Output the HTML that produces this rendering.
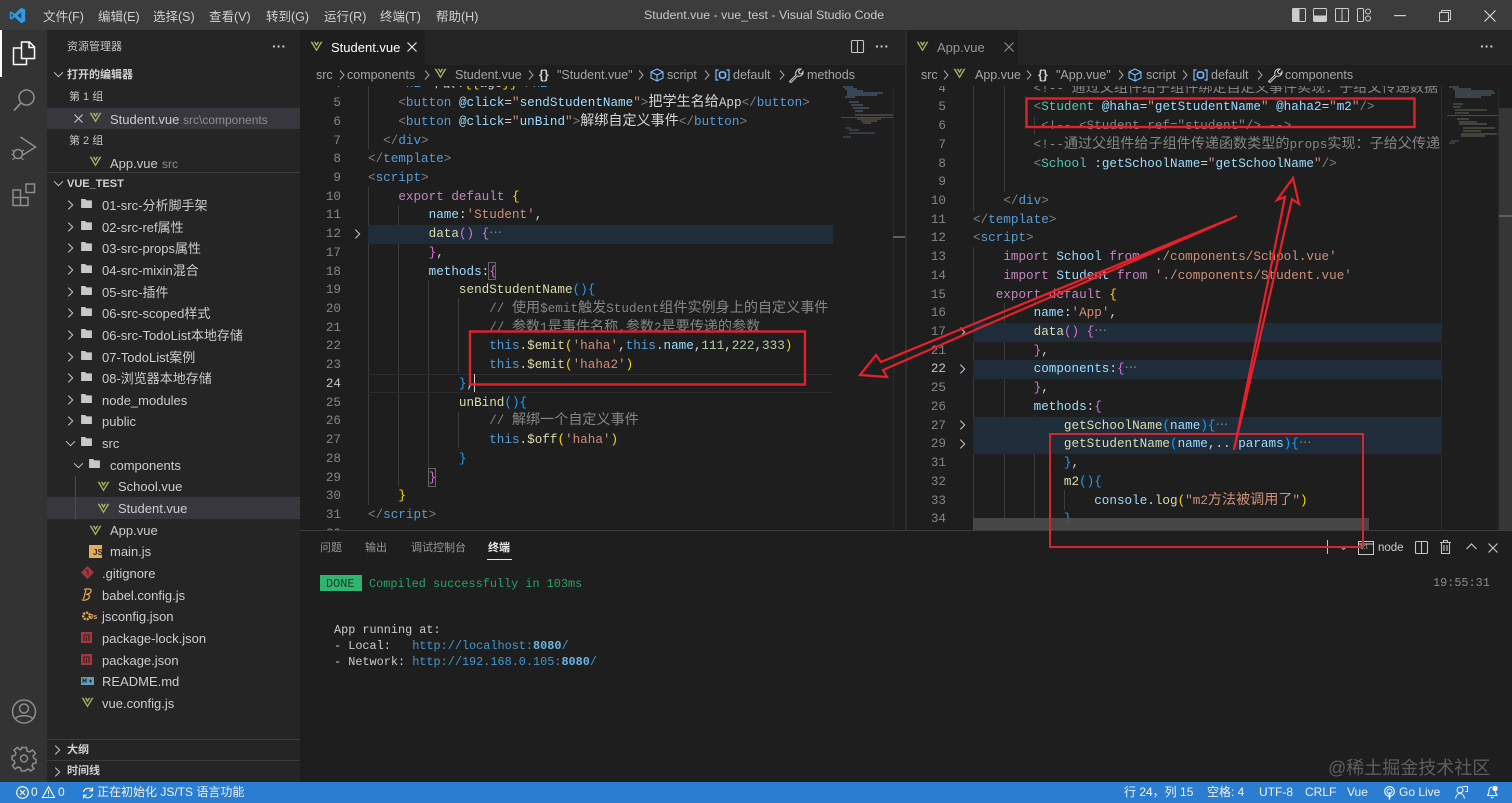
<!DOCTYPE html>
<html lang="zh">
<head>
<meta charset="utf-8">
<title>Student.vue - vue_test - Visual Studio Code</title>
<style>
html,body{margin:0;padding:0;background:#1e1e1e;}
body{width:1512px;height:803px;position:relative;overflow:hidden;font-family:"Liberation Sans","Noto Sans CJK SC",sans-serif;font-size:13px;color:#ccc;filter:blur(.35px);}
.a{position:absolute;white-space:pre;height:20px;line-height:20px;}
.bx{position:absolute;}
svg{position:absolute;overflow:visible;}
.m{font-size:12.5px;color:#d0d0d0;top:6.5px;}
.s{color:#ccc;margin-top:1px;}
.g{font-size:12px;color:#8f8f8f;margin-top:1px;}
.h11{font-size:11px;color:#c4c4c4;}
.b11{font-size:11px;color:#d0d0d0;font-weight:bold;}
.bc{font-size:12.5px;color:#a5a5a5;top:65px;}
.st{font-size:12px;color:#f2f2f2;top:782px;}
.pt{font-size:11px;color:#979797;top:538px;}
.pane{position:absolute;top:86px;height:444px;overflow:hidden;isolation:isolate;font-family:"Liberation Mono","Noto Sans CJK SC",monospace;font-size:12.63px;color:#d4d4d4;}
.r{position:relative;height:18.73px;line-height:18.73px;white-space:pre;}
.r b{position:absolute;top:0;text-align:right;color:#858585;font-weight:normal;}
.r i,.tm i{font-style:normal;font-size:14.1px;}
.p1 .r{padding-left:68px;}
.p1 .r b{left:0;width:41px;}
.p2 .r{padding-left:66px;}
.p2 .r b{left:0;width:39px;}
.hl::before{content:"";position:absolute;right:0;top:0;bottom:0;background:#1f2d3a;z-index:-1;}
.p1 .hl::before{left:68px;}
.p2 .hl::before{left:66px;}
.gd{position:absolute;width:1px;background:#3c3c3c;z-index:-1;}
.t{color:#808080}.n{color:#569cd6}.at{color:#9cdcfe}.str{color:#ce9178}.c{color:#4ec9b0}.cm{color:#858585}.k{color:#c586c0}.f{color:#dcdcaa}.y{color:#ffd700}.pu{color:#da70d6}.bl{color:#179fff}.nm{color:#b5cea8}
.fd{position:absolute;top:5px;}
.tm{position:absolute;font-family:"Liberation Mono","Noto Sans CJK SC",monospace;font-size:11.85px;white-space:pre;height:16px;line-height:16px;color:#cccccc;}
.u{color:#3f98cf}.ub{color:#66b8e8;font-weight:bold}
</style>
</head>
<body>
<svg width="0" height="0" style="position:absolute">
  <defs>
    <symbol id="v" viewBox="0 0 14 12"><path d="M.5 .8 7 11.500 13.500 .8H11.600L7 8.800 2.400 .8Z" fill="#a3b766"/><path d="M4 .8 7 5.800 10 .8H8.300L7 3 5.700 .8Z" fill="#a3b766"/></symbol>
    <symbol id="fo" viewBox="0 0 12 10"><path d="M0 0H4.500L6 1.500H12V10H0Z" fill="#c8c8c8"/></symbol>
    <symbol id="cr" viewBox="0 0 8 12"><path d="M1.500 1 6.500 6 1.500 11" fill="none" stroke="#c5c5c5" stroke-width="1.200"/></symbol>
    <symbol id="cd" viewBox="0 0 12 8"><path d="M1 1.500 6 6.500 11 1.500" fill="none" stroke="#c5c5c5" stroke-width="1.200"/></symbol>
    <symbol id="sep" viewBox="0 0 6 10"><path d="M1 .5 5 5 1 9.500" fill="none" stroke="#a5a5a5" stroke-width="1"/></symbol>
    <symbol id="cube" viewBox="0 0 14 14"><path d="M7 1 13 4V10L7 13 1 10V4ZM1 4 7 7 13 4M7 7V13" fill="none" stroke="#75beff" stroke-width="1.100"/></symbol>
    <symbol id="field" viewBox="0 0 15 12"><path d="M3.500 1H1V11H3.500M11.500 1H14V11H11.500" fill="none" stroke="#75beff" stroke-width="1.200"/><rect x="4.500" y="3" width="6" height="6" rx="2" fill="none" stroke="#75beff" stroke-width="1.600"/></symbol>
    <symbol id="wr" viewBox="0 0 16 16"><path d="M1.500 14.500 8 8C7 5 9 1.500 13 2L10.500 4.500 11.500 6.500 13.500 7 15 4.500C15.500 8 12 10 9.500 9L3 15.500Z" fill="none" stroke="#c5c5c5" stroke-width="1.100"/></symbol>
  </defs>
</svg>

<!-- title bar -->
<div class="bx" style="left:0;top:0;width:1512px;height:30px;background:#3c3c3c"></div>
<svg style="left:9px;top:7px" width="17" height="17" viewBox="0 0 17 17"><path d="M12.200 .8 16.200 2.600V14.400L12.200 16.200 5.600 10 2.300 12.600.8 11.800V5.200L2.300 4.400 5.600 7ZM12.200 5.200 8.400 8.500 12.200 11.800Z" fill="#2f9be8"/><path d="M2.300 6.300V10.700L4.500 8.500Z" fill="#3c3c3c"/></svg>
<div class="a m" style="left:43px">文件(F)</div>
<div class="a m" style="left:98px">编辑(E)</div>
<div class="a m" style="left:153px">选择(S)</div>
<div class="a m" style="left:209px">查看(V)</div>
<div class="a m" style="left:266px">转到(G)</div>
<div class="a m" style="left:324px">运行(R)</div>
<div class="a m" style="left:380px">终端(T)</div>
<div class="a m" style="left:436px">帮助(H)</div>
<div class="a" style="left:644px;top:5px;font-size:12.400px;color:#c8c8c8">Student.vue - vue_test - Visual Studio Code</div>
<svg style="left:1292px;top:8px" width="14" height="14"><rect x=".5" y=".5" width="13" height="13" rx="1" fill="none" stroke="#ccc"/><rect x=".5" y=".5" width="7" height="13" fill="#ccc"/></svg>
<svg style="left:1313px;top:8px" width="14" height="14"><rect x=".5" y=".5" width="13" height="13" rx="1" fill="none" stroke="#ccc"/><rect x=".5" y="7.500" width="13" height="6" fill="#ccc"/></svg>
<svg style="left:1335px;top:8px" width="14" height="14"><rect x=".5" y=".5" width="13" height="13" rx="1" fill="none" stroke="#ccc"/><path d="M7 .5V13.500" stroke="#ccc"/></svg>
<svg style="left:1357px;top:8px" width="14" height="14"><rect x=".5" y=".5" width="6" height="13" rx="1" fill="none" stroke="#ccc"/><circle cx="11" cy="3.500" r="2.500" fill="none" stroke="#ccc"/><circle cx="11" cy="10.500" r="2.500" fill="none" stroke="#ccc"/></svg>
<svg style="left:1394px;top:15px" width="12" height="2"><rect width="12" height="1.200" fill="#ccc"/></svg>
<svg style="left:1439px;top:10px" width="12" height="12"><path d="M.5 2.500H9.500V11.500H.5ZM2.500 2.500V.5H11.500V9.500H9.500" fill="none" stroke="#ccc"/></svg>
<svg style="left:1484px;top:10px" width="12" height="12"><path d="M.5 .5 11.500 11.500M11.500 .5 .5 11.500" stroke="#ddd" stroke-width="1.100"/></svg>

<!-- activity bar -->
<div class="bx" style="left:0;top:30px;width:47px;height:752px;background:#333"></div>
<div class="bx" style="left:0;top:30px;width:2px;height:47px;background:#fff"></div>
<svg style="left:12px;top:41px" width="24" height="25"><path d="M9.500 1H17.500L22.500 6V17.500H9.500ZM17 1V6.500H22.500M9.500 7H1.500V23.500H14.500V17.500" fill="none" stroke="#fff" stroke-width="1.500"/></svg>
<svg style="left:12px;top:88px" width="24" height="24"><circle cx="14.500" cy="9.500" r="7.500" fill="none" stroke="#8d8d8d" stroke-width="1.500"/><path d="M9 15 2 22.500" stroke="#8d8d8d" stroke-width="1.700"/></svg>
<svg style="left:11px;top:135px" width="26" height="26"><path d="M9.500 2 24.500 12 11 20.500" fill="none" stroke="#8d8d8d" stroke-width="1.500"/><circle cx="7" cy="19" r="4.500" fill="none" stroke="#8d8d8d" stroke-width="1.500"/><path d="M1 15 4 17M13 15 10 17M.5 19.500H2.500M11.500 19.500H13.500M1.500 25 4 22.500M12.500 25 10 22.500" stroke="#8d8d8d" stroke-width="1.200"/></svg>
<svg style="left:12px;top:183px" width="24" height="24"><path d="M1 7H8.500V14.500H16V22.500H1ZM1 14.500H8.500V22.500" fill="none" stroke="#8d8d8d" stroke-width="1.500"/><rect x="14" y="1" width="8.500" height="8.500" fill="none" stroke="#8d8d8d" stroke-width="1.500"/></svg>
<svg style="left:11px;top:699px" width="26" height="26"><circle cx="13" cy="12.500" r="11.500" fill="none" stroke="#8d8d8d" stroke-width="1.500"/><circle cx="13" cy="9.500" r="4.500" fill="none" stroke="#8d8d8d" stroke-width="1.500"/><path d="M4.500 20C6 15.500 20 15.500 21.500 20" fill="none" stroke="#8d8d8d" stroke-width="1.500"/></svg>
<svg style="left:11px;top:746px" width="26" height="26"><circle cx="13" cy="12.500" r="3.500" fill="none" stroke="#8d8d8d" stroke-width="1.500"/><path d="M10.500 1.500H15.500L16 5 18.500 6 21.500 4 24.500 7.500 22 10 23 12.500 25 13.500V17L22 17.500 21 20 23 22.500 19.500 25 17.500 23 15 24 14.500 25H10.500L9.500 22 7 21 4 23 1.500 19.500 4 17 3 14.500 1 13.500V10L4 9.500 5 7 3 4 6.500 1.500 9 4 10 3.500Z" fill="none" stroke="#8d8d8d" stroke-width="1.500"/></svg>

<!-- sidebar -->
<div class="bx" style="left:47px;top:30px;width:253px;height:752px;background:#252526"></div>
<div class="a h11" style="left:67px;top:37px">资源管理器</div>
<div class="a" style="left:272px;top:36px;font-size:14px;font-weight:bold;color:#c5c5c5;letter-spacing:0">···</div>
<svg style="left:53px;top:71px" width="11" height="7"><use href="#cd"/></svg>
<div class="a b11" style="left:67px;top:65px">打开的编辑器</div>
<div class="a h11" style="left:69px;top:87px">第 1 组</div>
<div class="bx" style="left:47px;top:108px;width:253px;height:21px;background:#37373d"></div>
<svg style="left:74px;top:114px" width="9" height="9"><path d="M.5 .5 8.500 8.500M8.500 .5 .5 8.500" stroke="#c5c5c5" stroke-width="1.100"/></svg>
<svg style="left:89px;top:112px" width="13" height="11"><use href="#v"/></svg>
<div class="a s" style="left:110px;top:109px">Student.vue</div>
<div class="a g" style="left:183px;top:109px">src\components</div>
<div class="a h11" style="left:69px;top:131px">第 2 组</div>
<svg style="left:89px;top:156px" width="13" height="11"><use href="#v"/></svg>
<div class="a s" style="left:110px;top:153px">App.vue</div>
<div class="a g" style="left:162px;top:153px">src</div>
<div class="bx" style="left:47px;top:172px;width:253px;height:1px;background:#3c3c3c"></div>
<svg style="left:53px;top:180px" width="11" height="7"><use href="#cd"/></svg>
<div class="a b11" style="left:67px;top:174px">VUE_TEST</div>

<svg style="left:67px;top:199px" width="7" height="12"><use href="#cr"/></svg><svg style="left:81px;top:199px" width="11" height="9"><use href="#fo"/></svg><div class="a s" style="left:102px;top:195px">01-src-分析脚手架</div>
<svg style="left:67px;top:221px" width="7" height="12"><use href="#cr"/></svg><svg style="left:81px;top:221px" width="11" height="9"><use href="#fo"/></svg><div class="a s" style="left:102px;top:217px">02-src-ref属性</div>
<svg style="left:67px;top:242px" width="7" height="12"><use href="#cr"/></svg><svg style="left:81px;top:242px" width="11" height="9"><use href="#fo"/></svg><div class="a s" style="left:102px;top:238px">03-src-props属性</div>
<svg style="left:67px;top:264px" width="7" height="12"><use href="#cr"/></svg><svg style="left:81px;top:264px" width="11" height="9"><use href="#fo"/></svg><div class="a s" style="left:102px;top:260px">04-src-mixin混合</div>
<svg style="left:67px;top:286px" width="7" height="12"><use href="#cr"/></svg><svg style="left:81px;top:286px" width="11" height="9"><use href="#fo"/></svg><div class="a s" style="left:102px;top:282px">05-src-插件</div>
<svg style="left:67px;top:307px" width="7" height="12"><use href="#cr"/></svg><svg style="left:81px;top:307px" width="11" height="9"><use href="#fo"/></svg><div class="a s" style="left:102px;top:303px">06-src-scoped样式</div>
<svg style="left:67px;top:329px" width="7" height="12"><use href="#cr"/></svg><svg style="left:81px;top:329px" width="11" height="9"><use href="#fo"/></svg><div class="a s" style="left:102px;top:325px">06-src-TodoList本地存储</div>
<svg style="left:67px;top:351px" width="7" height="12"><use href="#cr"/></svg><svg style="left:81px;top:351px" width="11" height="9"><use href="#fo"/></svg><div class="a s" style="left:102px;top:347px">07-TodoList案例</div>
<svg style="left:67px;top:372px" width="7" height="12"><use href="#cr"/></svg><svg style="left:81px;top:372px" width="11" height="9"><use href="#fo"/></svg><div class="a s" style="left:102px;top:368px">08-浏览器本地存储</div>
<svg style="left:67px;top:394px" width="7" height="12"><use href="#cr"/></svg><svg style="left:81px;top:394px" width="11" height="9"><use href="#fo"/></svg><div class="a s" style="left:102px;top:390px">node_modules</div>
<svg style="left:67px;top:415px" width="7" height="12"><use href="#cr"/></svg><svg style="left:81px;top:415px" width="11" height="9"><use href="#fo"/></svg><div class="a s" style="left:102px;top:411px">public</div>
<svg style="left:65px;top:440px" width="11" height="7"><use href="#cd"/></svg><svg style="left:81px;top:437px" width="11" height="9"><use href="#fo"/></svg><div class="a s" style="left:102px;top:433px">src</div>
<svg style="left:73px;top:462px" width="11" height="7"><use href="#cd"/></svg><svg style="left:89px;top:459px" width="11" height="9"><use href="#fo"/></svg><div class="a s" style="left:110px;top:455px">components</div>
<svg style="left:97px;top:481px" width="13" height="11"><use href="#v"/></svg><div class="a s" style="left:118px;top:476px">School.vue</div>
<div class="bx" style="left:47px;top:497px;width:253px;height:22px;background:#37373d"></div>
<svg style="left:97px;top:503px" width="13" height="11"><use href="#v"/></svg><div class="a s" style="left:118px;top:498px">Student.vue</div>
<svg style="left:89px;top:525px" width="13" height="11"><use href="#v"/></svg><div class="a s" style="left:110px;top:520px">App.vue</div>
<div class="bx" style="left:89px;top:545px;width:13px;height:13px;background:#e8ab53"></div><div class="a" style="left:93px;top:548px;font-size:8px;font-weight:bold;color:#252526;height:10px;line-height:10px">JS</div>
<div class="a s" style="left:110px;top:541px">main.js</div>
<svg style="left:81px;top:566px" width="13" height="13"><path d="M6.500 0 13 6.500 6.500 13 0 6.500Z" fill="#a8343c"/><path d="M5 3.500 7 5.500V9" stroke="#252526" fill="none"/></svg><div class="a s" style="left:102px;top:563px">.gitignore</div>
<svg style="left:81px;top:588px" width="12" height="13"><path d="M3 1.500C7 .5 11 .5 10 3.500 9.500 5.500 7 6 5 6.500 9 6 9 8.500 7.500 10.500 6 12.500 1 12.500 1 11.500M5 2 2.500 11" fill="none" stroke="#e8ab53" stroke-width="1.200"/></svg><div class="a s" style="left:102px;top:585px">babel.config.js</div>
<svg style="left:81px;top:610px" width="13" height="13"><circle cx="5.500" cy="6" r="3.300" fill="none" stroke="#e8ab53" stroke-width="2.400" stroke-dasharray="2 1"/></svg><div class="a" style="left:89px;top:612px;font-size:7.500px;font-weight:bold;color:#e8ab53;height:10px;line-height:10px">Js</div><div class="a s" style="left:102px;top:606px">jsconfig.json</div>
<svg style="left:81px;top:632px" width="11" height="11"><rect width="11" height="11" fill="#a8343c"/><path d="M3 9V3H8V9M5.500 5V9" stroke="#252526" fill="none" stroke-width="1.100"/></svg><div class="a s" style="left:102px;top:628px">package-lock.json</div>
<svg style="left:81px;top:654px" width="11" height="11"><rect width="11" height="11" fill="#a8343c"/><path d="M3 9V3H8V9M5.500 5V9" stroke="#252526" fill="none" stroke-width="1.100"/></svg><div class="a s" style="left:102px;top:650px">package.json</div>
<svg style="left:81px;top:677px" width="13" height="8"><rect width="13" height="8" fill="#5d9cbf"/><path d="M2 6V2L3.500 4 5 2V6M8 4H11M9.500 2.500V5.500" stroke="#252526" fill="none"/></svg><div class="a s" style="left:102px;top:671px">README.md</div>
<svg style="left:81px;top:697px" width="13" height="11"><use href="#v"/></svg><div class="a s" style="left:102px;top:693px">vue.config.js</div>
<div class="bx" style="left:75px;top:476px;width:1px;height:44px;background:#4a4a4a"></div>

<div class="bx" style="left:47px;top:739px;width:253px;height:1px;background:#3c3c3c"></div>
<svg style="left:54px;top:744px" width="7" height="12"><use href="#cr"/></svg>
<div class="a b11" style="left:67px;top:740px">大纲</div>
<div class="bx" style="left:47px;top:760px;width:253px;height:1px;background:#3c3c3c"></div>
<svg style="left:54px;top:766px" width="7" height="12"><use href="#cr"/></svg>
<div class="a b11" style="left:67px;top:761px">时间线</div>

<!-- editor tabs -->
<div class="bx" style="left:300px;top:30px;width:1212px;height:35px;background:#252526"></div>
<div class="bx" style="left:300px;top:30px;width:125px;height:35px;background:#1e1e1e"></div>
<div class="bx" style="left:907px;top:30px;width:111px;height:35px;background:#1e1e1e"></div>
<div class="bx" style="left:300px;top:65px;width:1212px;height:21px;background:#1e1e1e"></div>
<div class="bx" style="left:905px;top:30px;width:2px;height:500px;background:#2c2c2c"></div>
<svg style="left:310px;top:41px" width="13" height="11"><use href="#v"/></svg>
<div class="a" style="left:331px;top:38px;color:#fff">Student.vue</div>
<svg style="left:407px;top:42px" width="10" height="10"><path d="M.5 .5 9.500 9.500M9.500 .5 .5 9.500" stroke="#e6e6e6" stroke-width="1.200"/></svg>
<svg style="left:851px;top:40px" width="13" height="13"><rect x=".5" y=".5" width="12" height="12" rx="1" fill="none" stroke="#c5c5c5" stroke-width="1.100"/><path d="M6.500 .5V12.500" stroke="#c5c5c5" stroke-width="1.100"/></svg>
<div class="a" style="left:875px;top:36px;font-size:14px;font-weight:bold;color:#c5c5c5">···</div>
<svg style="left:916px;top:41px" width="13" height="11"><use href="#v"/></svg>
<div class="a" style="left:937px;top:38px;color:#969696">App.vue</div>
<svg style="left:1004px;top:42px" width="10" height="10"><path d="M.5 .5 9.500 9.500M9.500 .5 .5 9.500" stroke="#8f8f8f" stroke-width="1.100"/></svg>
<div class="a" style="left:1480px;top:36px;font-size:14px;font-weight:bold;color:#c5c5c5">···</div>

<!-- breadcrumbs left -->
<div class="a bc" style="left:316px">src</div><svg style="left:339px;top:70px" width="6" height="10"><use href="#sep"/></svg>
<div class="a bc" style="left:347px">components</div><svg style="left:424px;top:70px" width="6" height="10"><use href="#sep"/></svg>
<svg style="left:434px;top:68px" width="13" height="11"><use href="#v"/></svg>
<div class="a bc" style="left:455px">Student.vue</div><svg style="left:528px;top:70px" width="6" height="10"><use href="#sep"/></svg>
<div class="a bc" style="left:539px;color:#d0d0d0;font-weight:bold">{}</div>
<div class="a bc" style="left:557px">"Student.vue"</div><svg style="left:638px;top:70px" width="6" height="10"><use href="#sep"/></svg>
<svg style="left:650px;top:68px" width="14" height="14"><use href="#cube"/></svg>
<div class="a bc" style="left:667px">script</div><svg style="left:704px;top:70px" width="6" height="10"><use href="#sep"/></svg>
<svg style="left:715px;top:69px" width="15" height="12"><use href="#field"/></svg>
<div class="a bc" style="left:733px">default</div><svg style="left:779px;top:70px" width="6" height="10"><use href="#sep"/></svg>
<svg style="left:788px;top:67px" width="16" height="16"><use href="#wr"/></svg>
<div class="a bc" style="left:807px">methods</div>

<!-- breadcrumbs right -->
<div class="a bc" style="left:921px">src</div><svg style="left:943px;top:70px" width="6" height="10"><use href="#sep"/></svg>
<svg style="left:953px;top:68px" width="13" height="11"><use href="#v"/></svg>
<div class="a bc" style="left:975px">App.vue</div><svg style="left:1026px;top:70px" width="6" height="10"><use href="#sep"/></svg>
<div class="a bc" style="left:1038px;color:#d0d0d0;font-weight:bold">{}</div>
<div class="a bc" style="left:1056px">"App.vue"</div><svg style="left:1118px;top:70px" width="6" height="10"><use href="#sep"/></svg>
<svg style="left:1128px;top:68px" width="14" height="14"><use href="#cube"/></svg>
<div class="a bc" style="left:1146px">script</div><svg style="left:1182px;top:70px" width="6" height="10"><use href="#sep"/></svg>
<svg style="left:1193px;top:69px" width="15" height="12"><use href="#field"/></svg>
<div class="a bc" style="left:1211px">default</div><svg style="left:1257px;top:70px" width="6" height="10"><use href="#sep"/></svg>
<svg style="left:1267px;top:67px" width="16" height="16"><use href="#wr"/></svg>
<div class="a bc" style="left:1285px">components</div>

<!-- left code pane -->
<div class="pane p1" style="left:300px;width:533px;background:#1e1e1e">
<span class="gd" style="left:68px;top:0;height:63px"></span>
<span class="gd" style="left:68px;top:101px;height:318px"></span>
<span class="gd" style="left:98px;top:120px;height:281px"></span>
<span class="gd" style="left:128px;top:194px;height:188px"></span>
<span class="gd" style="left:158px;top:212px;height:75px"></span>
<span class="gd" style="left:158px;top:326px;height:36px"></span>
<span class="bx" style="left:68px;right:0;top:288px;height:17px;border-top:1px solid #2c2c2c;border-bottom:1px solid #2c2c2c;z-index:-1"></span>
<div class="r" style="margin-top:-10.600px"><b>4</b>    <span class="t">&lt;</span><span class="n">h2</span><span class="t">&gt;</span><i>年龄</i>:<span class="y">{{</span>age<span class="y">}}</span><span class="t">&lt;/</span><span class="n">h2</span><span class="t">&gt;</span></div>
<div class="r"><b>5</b>    <span class="t">&lt;</span><span class="n">button</span> <span class="at">@click</span>=<span class="str">"</span><span class="at">sendStudentName</span><span class="str">"</span><span class="t">&gt;</span><i>把学生名给</i>App<span class="t">&lt;/</span><span class="n">button</span><span class="t">&gt;</span></div>
<div class="r"><b>6</b>    <span class="t">&lt;</span><span class="n">button</span> <span class="at">@click</span>=<span class="str">"</span><span class="at">unBind</span><span class="str">"</span><span class="t">&gt;</span><i>解绑自定义事件</i><span class="t">&lt;/</span><span class="n">button</span><span class="t">&gt;</span></div>
<div class="r"><b>7</b>  <span class="t">&lt;/</span><span class="n">div</span><span class="t">&gt;</span></div>
<div class="r"><b>8</b><span class="t">&lt;/</span><span class="n">template</span><span class="t">&gt;</span></div>
<div class="r"><b>9</b><span class="t">&lt;</span><span class="n">script</span><span class="t">&gt;</span></div>
<div class="r"><b>10</b>    <span class="k">export</span> <span class="k">default</span> <span class="y">{</span></div>
<div class="r"><b>11</b>        <span class="at">name</span>:<span class="str">'Student'</span>,</div>
<div class="r hl"><b>12</b>        <span class="f">data</span><span class="pu">()</span> <span class="pu">{</span><span class="cm">⋯</span></div>
<div class="r"><b>17</b>        <span class="pu">}</span>,</div>
<div class="r"><b>18</b>        <span class="at">methods</span>:<span class="pu">{</span></div>
<div class="r"><b>19</b>            <span class="f">sendStudentName</span><span class="bl">()</span><span class="bl">{</span></div>
<div class="r"><b>20</b>                <span class="cm">// <i>使用</i>$emit<i>触发</i>Student<i>组件实例身上的自定义事件</i></span></div>
<div class="r"><b>21</b>                <span class="cm">// <i>参数</i>1<i>是事件名称</i>,<i>参数</i>2<i>是要传递的参数</i></span></div>
<div class="r"><b>22</b>                <span class="n">this</span>.<span class="f">$emit</span><span class="y">(</span><span class="str">'haha'</span>,<span class="n">this</span>.<span class="at">name</span>,<span class="nm">111</span>,<span class="nm">222</span>,<span class="nm">333</span><span class="y">)</span></div>
<div class="r"><b>23</b>                <span class="n">this</span>.<span class="f">$emit</span><span class="y">(</span><span class="str">'haha2'</span><span class="y">)</span></div>
<div class="r"><b style="color:#c6c6c6">24</b>            <span class="bl">}</span>,</div>
<div class="r"><b>25</b>            <span class="f">unBind</span><span class="bl">()</span><span class="bl">{</span></div>
<div class="r"><b>26</b>                <span class="cm">// <i>解绑一个自定义事件</i></span></div>
<div class="r"><b>27</b>                <span class="n">this</span>.<span class="f">$off</span><span class="y">(</span><span class="str">'haha'</span><span class="y">)</span></div>
<div class="r"><b>28</b>            <span class="bl">}</span></div>
<div class="r"><b>29</b>        <span class="pu">}</span></div>
<div class="r"><b>30</b>    <span class="y">}</span></div>
<div class="r"><b>31</b><span class="t">&lt;/</span><span class="n">script</span><span class="t">&gt;</span></div>
<div class="r"><b>32</b></div>
</div>
<svg style="left:354px;top:228px" width="7" height="12"><use href="#cr"/></svg>
<div class="bx" style="left:474px;top:374px;width:1px;height:18px;background:#d4d4d4"></div>
<div class="bx" style="left:428px;top:468px;width:8px;height:19px;border:1px solid #666;box-sizing:border-box"></div>
<div class="bx" style="left:488px;top:262px;width:8px;height:18px;border:1px solid #666;box-sizing:border-box"></div>

<!-- left minimap -->
<svg style="left:833px;top:86px" width="72" height="444">
  <rect x="0" y="0" width="72" height="444" fill="#1e1e1e"/>
  <path d="M10 1H20M12 3H24M14 5H30M14 7H50M14 9H44M12 11H22" stroke="#51708c" stroke-width="1"/>
  <path d="M16 16H26M18 19H30M20 22H36M22 25H30" stroke="#5c6e7c" stroke-width="1"/>
  <path d="M22 29H60M24 33H48M28 35H44M30 37H38" stroke="#6d6258" stroke-width="1"/>
  <path d="M12 42H18M16 44H26M16 47H42M10 51H18" stroke="#4e5a62" stroke-width="1"/>
  <rect x="8" y="31" width="52" height="1" fill="#2d4f75"/>
  <rect x="60" y="0" width="1" height="444" fill="#2a2a2a"/>
  <rect x="60" y="150" width="12" height="2" fill="#5f5f5f"/>
</svg>

<!-- right code pane -->
<div class="pane p2" style="left:907px;width:534px;background:#1e1e1e">
<span class="gd" style="left:66px;top:0;height:125px"></span>
<span class="gd" style="left:66px;top:161px;height:283px"></span>
<span class="gd" style="left:97px;top:0;height:106px"></span>
<span class="gd" style="left:97px;top:217px;height:227px"></span>
<span class="gd" style="left:127px;top:31px;height:18px"></span>
<span class="gd" style="left:127px;top:329px;height:115px"></span>
<span class="gd" style="left:157px;top:404px;height:20px"></span>
<div class="r" style="margin-top:-6.300px"><b>4</b>        <span class="cm">&lt;!-- <i>通过父组件给子组件绑定自定义事件实现：子给父传递数据</i></span></div>
<div class="r"><b>5</b>        <span class="t">&lt;</span><span class="c">Student</span> <span class="at">@haha</span>=<span class="str">"</span><span class="at">getStudentName</span><span class="str">"</span> <span class="at">@haha2</span>=<span class="str">"</span><span class="at">m2</span><span class="str">"</span><span class="t">/&gt;</span></div>
<div class="r"><b>6</b>         <span class="cm">&lt;!-- &lt;Student ref="student"/&gt; --&gt;</span></div>
<div class="r"><b>7</b>        <span class="cm">&lt;!--<i>通过父组件给子组件传递函数类型的</i>props<i>实现：子给父传递数据</i></span></div>
<div class="r"><b>8</b>        <span class="t">&lt;</span><span class="c">School</span> <span class="at">:getSchoolName</span>=<span class="str">"</span><span class="at">getSchoolName</span><span class="str">"</span><span class="t">/&gt;</span></div>
<div class="r"><b>9</b></div>
<div class="r"><b>10</b>    <span class="t">&lt;/</span><span class="n">div</span><span class="t">&gt;</span></div>
<div class="r"><b>11</b><span class="t">&lt;/</span><span class="n">template</span><span class="t">&gt;</span></div>
<div class="r"><b>12</b><span class="t">&lt;</span><span class="n">script</span><span class="t">&gt;</span></div>
<div class="r"><b>13</b>    <span class="k">import</span> <span class="at">School</span> <span class="k">from</span> <span class="str">'./components/School.vue'</span></div>
<div class="r"><b>14</b>    <span class="k">import</span> <span class="at">Student</span> <span class="k">from</span> <span class="str">'./components/Student.vue'</span></div>
<div class="r"><b>15</b>   <span class="k">export</span> <span class="k">default</span> <span class="y">{</span></div>
<div class="r"><b>16</b>        <span class="at">name</span>:<span class="str">'App'</span>,</div>
<div class="r hl"><b>17</b>        <span class="f">data</span><span class="pu">()</span> <span class="pu">{</span><span class="cm">⋯</span></div>
<div class="r"><b>21</b>        <span class="pu">}</span>,</div>
<div class="r hl"><b style="color:#c6c6c6">22</b>        <span class="at">components</span>:<span class="pu">{</span><span class="cm">⋯</span></div>
<div class="r"><b>25</b>        <span class="pu">}</span>,</div>
<div class="r"><b>26</b>        <span class="at">methods</span>:<span class="pu">{</span></div>
<div class="r hl"><b>27</b>            <span class="f">getSchoolName</span><span class="bl">(</span><span class="at">name</span><span class="bl">){</span><span class="cm">⋯</span></div>
<div class="r hl"><b>29</b>            <span class="f">getStudentName</span><span class="bl">(</span><span class="at">name</span>,...<span class="at">params</span><span class="bl">){</span><span class="cm">⋯</span></div>
<div class="r"><b>31</b>            <span class="bl">}</span>,</div>
<div class="r"><b>32</b>            <span class="f">m2</span><span class="bl">(){</span></div>
<div class="r"><b>33</b>                <span class="at">console</span>.<span class="f">log</span><span class="y">(</span><span class="str">"m2<i>方法被调用了</i>"</span><span class="y">)</span></div>
<div class="r"><b>34</b>            <span class="bl">}</span></div>
</div>
<svg style="left:959px;top:326px" width="7" height="12"><use href="#cr"/></svg>
<svg style="left:959px;top:363px" width="7" height="12"><use href="#cr"/></svg>
<svg style="left:959px;top:419px" width="7" height="12"><use href="#cr"/></svg>
<svg style="left:959px;top:438px" width="7" height="12"><use href="#cr"/></svg>
<div class="bx" style="left:973px;top:518px;width:396px;height:12px;background:#4a4a4a;opacity:.9"></div>

<!-- right minimap -->
<svg style="left:1441px;top:86px" width="71" height="444">
  <rect x="0" y="0" width="71" height="444" fill="#1e1e1e"/>
  <rect x="0" y="0" width="1" height="444" fill="#2c2c2c"/>
  <path d="M8 1H18M12 3H30M14 5H52M14 7H54M14 9H50M14 11H40" stroke="#566b72" stroke-width="1"/>
  <path d="M12 18H22M12 21H20M14 24H46M14 27H28" stroke="#5f6660" stroke-width="1"/>
  <path d="M16 33H28M18 36H36M18 38H46M22 42H54M22 45H40M20 48H56M20 50H44" stroke="#69655a" stroke-width="1"/>
  <path d="M10 55H18M8 57H14" stroke="#4e5a62" stroke-width="1"/>
  <rect x="6" y="29" width="52" height="1" fill="#2d4f75"/>
  <rect x="57" y="0" width="1" height="444" fill="#2a2a2a"/>
  <rect x="58" y="22" width="13" height="422" fill="#363636"/>
  <rect x="58" y="129" width="13" height="2" fill="#5f5f5f"/>
</svg>

<!-- panel -->
<div class="bx" style="left:300px;top:530px;width:1212px;height:252px;background:#1e1e1e;border-top:1px solid #3c3c3c;box-sizing:border-box"></div>
<div class="a pt" style="left:320px">问题</div>
<div class="a pt" style="left:365px">输出</div>
<div class="a pt" style="left:411px">调试控制台</div>
<div class="a pt" style="left:488px;color:#e7e7e7;font-weight:bold">终端</div>
<div class="bx" style="left:487px;top:559px;width:25px;height:1px;background:#e7e7e7"></div>

<div class="bx" style="left:320px;top:575px;width:42px;height:16px;background:#2fb56f"></div>
<div class="tm" style="left:326px;top:575.500px;color:#143d27">DONE</div>
<div class="tm" style="left:369px;top:575.500px;color:#23a368">Compiled successfully in 103ms</div>
<div class="tm" style="left:334px;top:622px">App running at:</div>
<div class="tm" style="left:334px;top:638px">- Local:   <span class="u">http://localhost:</span><span class="ub">8080</span><span class="u">/</span></div>
<div class="tm" style="left:334px;top:654px">- Network: <span class="u">http://192.168.0.105:</span><span class="ub">8080</span><span class="u">/</span></div>
<div class="tm" style="left:1433px;top:575px;color:#8a8a8a">19:55:31</div>

<div class="bx" style="left:1327px;top:540px;width:1px;height:14px;background:#c5c5c5"></div>
<svg style="left:1340px;top:546px" width="7" height="5"><path d="M1 1 3.500 3.500 6 1" stroke="#b0b0b0" fill="none"/></svg>
<svg style="left:1358px;top:541px" width="16" height="14"><rect x=".5" y=".5" width="15" height="13" fill="none" stroke="#c5c5c5"/><path d="M.5 3H15.500" stroke="#c5c5c5"/></svg>
<div class="a" style="left:1360px;top:541px;font-size:7px;color:#c5c5c5;height:14px;line-height:14px">c:\</div>
<div class="a" style="left:1378px;top:538px;font-size:11.500px;color:#ccc">node</div>
<svg style="left:1415px;top:541px" width="13" height="13"><rect x=".5" y=".5" width="12" height="12" rx="1" fill="none" stroke="#c5c5c5" stroke-width="1.100"/><path d="M6.500 .5V12.500" stroke="#c5c5c5" stroke-width="1.100"/></svg>
<svg style="left:1440px;top:540px" width="11" height="14"><path d="M0 2.500H11M3.500 2.500V.5H7.500V2.500M1.500 2.500V13.500H9.500V2.500M4 5V11M7 5V11" fill="none" stroke="#c5c5c5" stroke-width="1.100"/></svg>
<svg style="left:1466px;top:543px" width="11" height="7"><path d="M.5 6 5.500 1 10.500 6" fill="none" stroke="#c5c5c5" stroke-width="1.200"/></svg>
<svg style="left:1488px;top:543px" width="10" height="10"><path d="M.5 .5 9.500 9.500M9.500 .5 .5 9.500" stroke="#c5c5c5" stroke-width="1.200"/></svg>

<!-- red annotations -->
<svg style="left:0;top:0" width="1512" height="803">
  <g fill="none" stroke="#e3202c" stroke-width="2.400">
    <rect x="1026.500" y="98.500" width="388" height="28.500"/>
    <rect x="470" y="331.500" width="335" height="53"/>
  </g>
  <rect x="1050" y="434" width="313" height="113" fill="none" stroke="#d52530" stroke-width="2"/>
  <path d="M1237 216 881 362 876 355 860 375 887 377 883 370Z" fill="none" stroke="#e8202c" stroke-width="2.200" stroke-linejoin="miter"/>
  <path d="M1234 450 1285 197 1277 200 1293 178 1299 204 1292 199Z" fill="none" stroke="#e8202c" stroke-width="2.200" stroke-linejoin="miter"/>
</svg>

<!-- watermark -->
<div class="a" style="left:1328px;top:757px;height:22px;line-height:22px;font-size:18px;color:#5e5e5e">@稀土掘金技术社区</div>

<!-- status bar -->
<div class="bx" style="left:0;top:782px;width:1512px;height:21px;background:#2a7dd1"></div>
<svg style="left:16px;top:786px" width="13" height="13"><circle cx="6.500" cy="6.500" r="5.800" fill="none" stroke="#fff" stroke-width="1.100"/><path d="M4 4 9 9M9 4 4 9" stroke="#fff" stroke-width="1.100"/></svg>
<div class="a st" style="left:31px">0</div>
<svg style="left:42px;top:786px" width="13" height="12"><path d="M6.500 .8 12.500 11.500H.5Z" fill="none" stroke="#fff" stroke-width="1.100"/><path d="M6.500 4.500V8M6.500 9V10.300" stroke="#fff"/></svg>
<div class="a st" style="left:58px">0</div>
<svg style="left:82px;top:787px" width="12" height="12"><path d="M10.500 3.500A5 5 0 0 0 1.500 5M1.500 8.500A5 5 0 0 0 10.500 7M10.500 .5V3.800H7.300M1.500 11.500V8.200H4.700" fill="none" stroke="#fff" stroke-width="1.100"/></svg>
<div class="a st" style="left:97px;font-weight:normal">正在初始化 JS/TS 语言功能</div>
<div class="a st" style="left:1124px">行 24，列 15</div>
<div class="a st" style="left:1207px">空格: 4</div>
<div class="a st" style="left:1259px">UTF-8</div>
<div class="a st" style="left:1305px">CRLF</div>
<div class="a st" style="left:1347px">Vue</div>
<svg style="left:1384px;top:786px" width="11" height="14"><circle cx="5.500" cy="5.500" r="4.800" fill="none" stroke="#fff" stroke-width="1.100"/><circle cx="5.500" cy="5.500" r="2.500" fill="none" stroke="#fff"/><path d="M5.500 6V13.500" stroke="#fff" stroke-width="1.500"/></svg>
<div class="a st" style="left:1399px">Go Live</div>
<svg style="left:1455px;top:786px" width="13" height="13"><circle cx="5" cy="4" r="3" fill="none" stroke="#fff"/><path d="M.5 12.500C1 9 3 7.500 5 7.500S9 9 9.500 12.500M7.500 .5H12.500V5.500H10.500" fill="none" stroke="#fff"/></svg>
<svg style="left:1486px;top:785px" width="13" height="14"><path d="M6 2C3.500 2 3 4.500 3 6.500 3 9 1.500 10 1.500 10.500H11C11 10 9.500 9 9.500 6.500M5 12C5.500 13 7 13 7.500 12" fill="none" stroke="#fff" stroke-width="1.100"/><circle cx="9" cy="3.500" r="2.700" fill="#fff"/></svg>
</body>
</html>
